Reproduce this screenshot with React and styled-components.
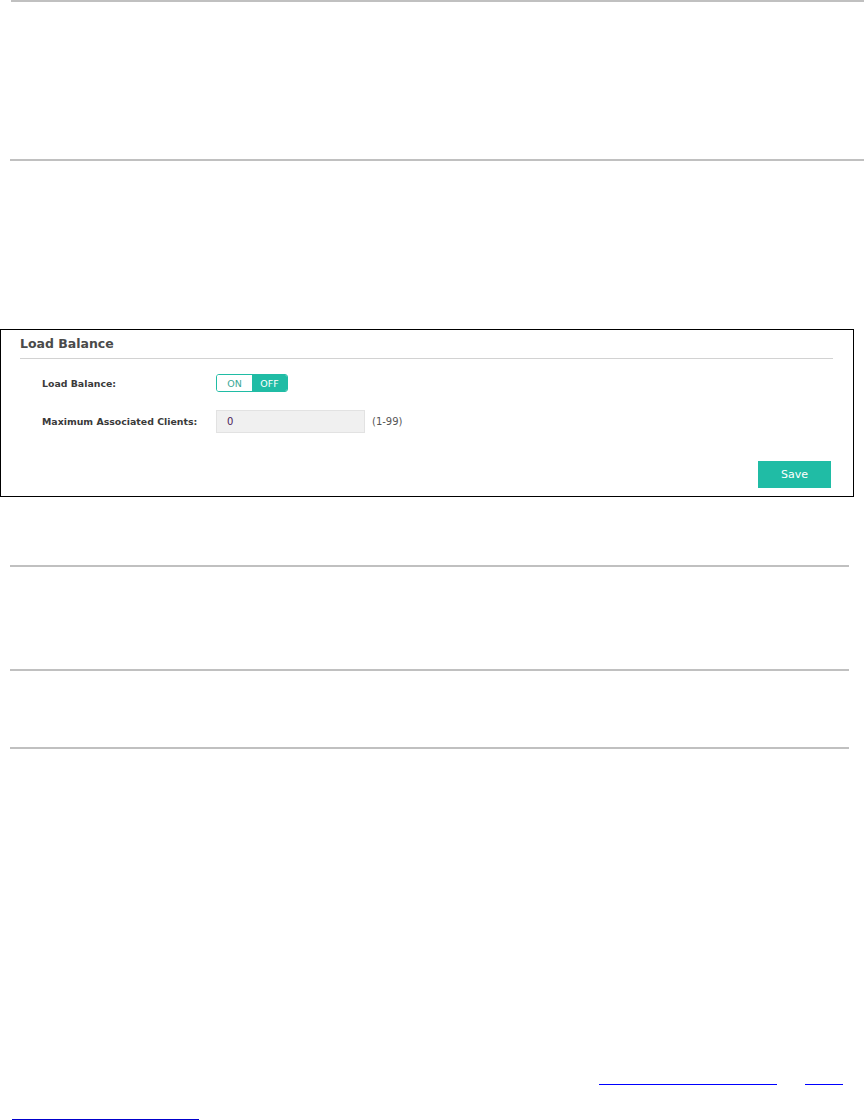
import styled, { createGlobalStyle } from 'styled-components';

const Global = createGlobalStyle`
  html, body {
    margin: 0;
    padding: 0;
    background: #fff;
    font-family: "DejaVu Sans", Verdana, sans-serif;
  }
`;

export default function App() {
  return (<>
    <Global />
    <Page>
      <Rule $top={0} $left={11} $right={0} />
      <Rule $top={157} $left={10} $right={0} />

      <Shot>
        <Title>Load Balance</Title>
        <Form>
          <Row $top={15}>
            <Label>Load Balance:</Label>
            <Toggle>
              <ToggleHalf>ON</ToggleHalf>
              <ToggleHalf $active>OFF</ToggleHalf>
            </Toggle>
          </Row>
          <Row $top={18}>
            <Label>Maximum Associated Clients:</Label>
            <Input defaultValue="0" />
            <Hint>(1-99)</Hint>
          </Row>
        </Form>
        <Actions>
          <SaveButton>Save</SaveButton>
        </Actions>
      </Shot>

      <Rule $top={68} $left={10} $right={15} />
      <Rule $top={102} $left={10} $right={15} />
      <Rule $top={76} $left={10} $right={15} />

      <LinkRow $top={321} $end>
        <LinkLine $w={178} />
        <LinkLine $w={38} />
      </LinkRow>
      <LinkRow $top={20}>
        <LinkLine $w={187} $dark />
      </LinkRow>
    </Page>
  </>);
}

const Page = styled.div`
  width: 864px;
  height: 1120px;
  overflow: hidden;
`;

const Rule = styled.div`
  height: 2px;
  background: #c0c0c0;
  margin: ${p => p.$top}px ${p => p.$right}px 0 ${p => p.$left}px;
`;

const Shot = styled.div`
  box-sizing: border-box;
  width: 854px;
  height: 168px;
  margin-top: 168px;
  border: 1px solid #000;
  padding: 0 20px 0 19px;
  display: flex;
  flex-direction: column;
`;

const Title = styled.div`
  padding: 5px 0 5px;
  margin-left: 0;
  line-height: 18px;
  font-size: 12.5px;
  font-weight: bold;
  color: #4a4a4a;
  border-bottom: 1px solid #d2d2d2;
`;

const Form = styled.div`
  padding-left: 22px;
`;

const Row = styled.div`
  display: flex;
  align-items: center;
  margin-top: ${p => p.$top}px;
`;

const Label = styled.div`
  width: 174px;
  font-size: 9.4px;
  font-weight: bold;
  color: #3a3a3a;
`;

const Toggle = styled.div`
  box-sizing: border-box;
  display: flex;
  width: 72px;
  height: 18px;
  border: 1px solid #20bca5;
  border-radius: 3px;
  overflow: hidden;
`;

const ToggleHalf = styled.div`
  flex: 1;
  display: flex;
  align-items: center;
  justify-content: center;
  font-size: 9.5px;
  background: ${p => (p.$active ? '#20bca5' : '#fff')};
  color: ${p => (p.$active ? '#fff' : '#3aa896')};
`;

const Input = styled.input`
  box-sizing: border-box;
  width: 149px;
  height: 23px;
  padding: 0 0 0 10px;
  border: 1px solid #e2e2e2;
  background: #f0f0f0;
  font-family: inherit;
  font-size: 10px;
  color: #4b1d5a;
  outline: none;
`;

const Hint = styled.span`
  margin-left: 7px;
  font-size: 10px;
  color: #555;
`;

const Actions = styled.div`
  display: flex;
  justify-content: flex-end;
  margin-top: auto;
  padding: 0 2px 8px 0;
`;

const SaveButton = styled.button`
  width: 73px;
  height: 27px;
  border: none;
  background: #20bca5;
  color: #fff;
  font-family: inherit;
  font-size: 11px;
  padding: 0;
`;

const LinkRow = styled.div`
  display: flex;
  gap: 28px;
  height: 15px;
  align-items: flex-end;
  justify-content: ${p => (p.$end ? 'flex-end' : 'flex-start')};
  margin-top: ${p => p.$top}px;
  padding: 0 21px 0 12px;
`;

const LinkLine = styled.a`
  display: block;
  width: ${p => p.$w}px;
  height: 1px;
  background: ${p => (p.$dark ? '#0000cc' : '#0000ff')};
`;
